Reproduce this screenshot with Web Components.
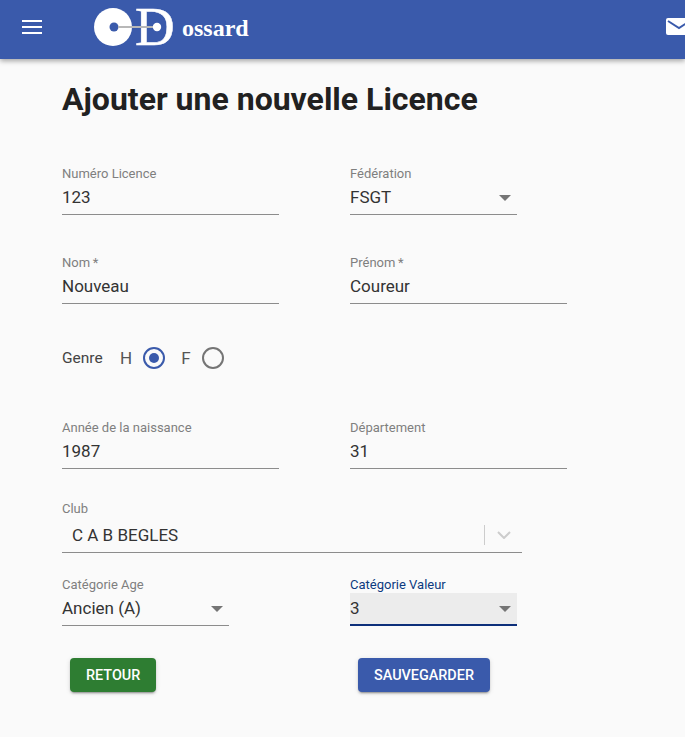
<!DOCTYPE html>
<html>
<head>
<meta charset="utf-8">
<style>
  html, body { margin: 0; padding: 0; background: #fafafa; height: 100%; overflow: hidden; }
  body { font-family: Roboto, "Liberation Sans", sans-serif; }
</style>
</head>
<body>
<app-bar></app-bar>
<licence-page>
  <form-row top="49">
    <text-field label="Numéro Licence" value="123" width="217"></text-field>
    <text-field label="Fédération" value="FSGT" width="167" select></text-field>
  </form-row>
  <form-row top="40">
    <text-field label="Nom&thinsp;*" value="Nouveau" width="217"></text-field>
    <text-field label="Prénom&thinsp;*" value="Coureur" width="217"></text-field>
  </form-row>
  <genre-field></genre-field>
  <form-row top="50">
    <text-field label="Année de la naissance" value="1987" width="217"></text-field>
    <text-field label="Département" value="31" width="217"></text-field>
  </form-row>
  <club-field></club-field>
  <form-row top="24">
    <text-field label="Catégorie Age" value="Ancien (A)" width="167" select></text-field>
    <text-field label="Catégorie Valeur" value="3" width="167" select focused></text-field>
  </form-row>
  <form-actions></form-actions>
</licence-page>

<script>
class AppBar extends HTMLElement {
  constructor() {
    super()
    this.attachShadow({ mode: 'open' }).innerHTML = `
      <style>
        :host { display: flex; align-items: center; height: 59px; background: #3a5aab; box-shadow: 0 2px 5px rgba(0,0,0,.35); overflow: hidden; position: relative; }
        .menu { margin-left: 22px; width: 20px; height: 14px; flex: none; margin-top: -5px; }
        .logo { margin-left: 52px; flex: none; width: 84px; height: 40px; margin-top: -3px; overflow: visible; }
        .name { font: bold 24px/28px "Liberation Serif", serif; color: #fff; margin-left: 4px; margin-top: -4px; }
        .mail { position: absolute; left: 666px; top: 18px; width: 26px; height: 17px; }
      </style>
      <svg class="menu" viewBox="0 0 20 14"><path d="M0 1h20M0 7h20M0 13h20" stroke="#fff" stroke-width="2"/></svg>
      <svg class="logo" viewBox="0 0 84 40">
        <circle cx="19" cy="19" r="19" fill="#fff"/>
        <circle cx="20" cy="19" r="4.5" fill="#3a5aab"/>
        <text x="41" y="37" font-family="Liberation Serif" font-size="55" fill="#fff" stroke="#fff" stroke-width=".5">D</text>
        <line x1="24" y1="19" x2="60" y2="19" stroke="#b8b8b8" stroke-width="2"/>
        <circle cx="63" cy="19" r="4.2" fill="#fff"/>
      </svg>
      <span class="name">ossard</span>
      <svg class="mail" viewBox="0 0 26 17">
        <rect width="26" height="17" rx="2" fill="#fff"/>
        <path d="M2 3l11 7 11-7" fill="none" stroke="#3a5aab" stroke-width="2"/>
      </svg>`
  }
}

class LicencePage extends HTMLElement {
  constructor() {
    super()
    this.attachShadow({ mode: 'open' }).innerHTML = `
      <style>
        :host { display: block; padding: 0 0 0 62px; }
        h1 { margin: 0; padding-top: 22px; font: 700 32px/36px Roboto, sans-serif; color: #212121; }
      </style>
      <h1>Ajouter une nouvelle Licence</h1>
      <slot></slot>`
  }
}

class FormRow extends HTMLElement {
  constructor() {
    super()
    this.attachShadow({ mode: 'open' }).innerHTML = `
      <style>
        :host { display: grid; grid-template-columns: 288px auto; justify-content: start; }
      </style>
      <slot></slot>`
  }
  connectedCallback() {
    this.style.marginTop = (this.getAttribute('top') || 0) + 'px'
  }
}

class TextField extends HTMLElement {
  constructor() {
    super()
    this.attachShadow({ mode: 'open' })
  }
  connectedCallback() {
    const select = this.hasAttribute('select')
    const focused = this.hasAttribute('focused')
    this.shadowRoot.innerHTML = `
      <style>
        :host { display: block; width: ${this.getAttribute('width')}px; }
        label { display: block; font-size: 13px; line-height: 16px; height: 16px; color: ${focused ? '#0d3a80' : '#7f7f7f'}; }
        .box { position: relative; height: 33px; box-sizing: border-box; padding-top: 3px; font-size: 17px; line-height: 24px; color: #333;
               border-bottom: ${focused ? '2px solid #0d2f7a' : '1px solid #8c8c8c'}; background: ${focused ? '#ececec' : 'transparent'}; }
        .arrow { position: absolute; right: 6px; top: 13px; width: 0; height: 0; border: 6.5px solid transparent; border-bottom: 0; border-top: 6px solid #757575; }
      </style>
      <label>${this.getAttribute('label')}</label>
      <div class="box">${this.getAttribute('value')}${select ? '<span class="arrow"></span>' : ''}</div>`
  }
}

class GenreField extends HTMLElement {
  constructor() {
    super()
    this.attachShadow({ mode: 'open' }).innerHTML = `
      <style>
        :host { display: flex; align-items: center; height: 24px; margin-top: 42px; color: #444; }
        .label { font-size: 15.5px; width: 58px; }
        .opt { font-size: 17px; color: #555; }
        .radio { box-sizing: border-box; width: 22px; height: 22px; border-radius: 50%; border: 2px solid #757575; margin-left: 11px; position: relative; }
        .radio.on { border-color: #3a5aab; margin-right: 16px; }
        .radio.on::after { content: ""; position: absolute; left: 4px; top: 4px; width: 10px; height: 10px; border-radius: 50%; background: #3a5aab; }
      </style>
      <span class="label">Genre</span>
      <span class="opt">H</span><span class="radio on"></span>
      <span class="opt">F</span><span class="radio"></span>`
  }
}

class ClubField extends HTMLElement {
  constructor() {
    super()
    this.attachShadow({ mode: 'open' }).innerHTML = `
      <style>
        :host { display: block; width: 460px; margin-top: 32px; }
        label { display: block; font-size: 13px; line-height: 16px; color: #7f7f7f; }
        .box { display: flex; align-items: center; height: 36px; box-sizing: border-box; border-bottom: 1px solid #8c8c8c; padding-left: 10px; font-size: 17px; color: #333; }
        .value { flex: 1; }
        .sep { width: 1px; height: 20px; background: #ccc; }
        svg { width: 14px; height: 8px; margin: 0 11px 0 12px; }
      </style>
      <label>Club</label>
      <div class="box">
        <span class="value">C A B BEGLES</span>
        <span class="sep"></span>
        <svg viewBox="0 0 14 8"><path d="M1 1l6 6 6-6" fill="none" stroke="#ccc" stroke-width="2"/></svg>
      </div>`
  }
}

class FormActions extends HTMLElement {
  constructor() {
    super()
    this.attachShadow({ mode: 'open' }).innerHTML = `
      <style>
        :host { display: grid; grid-template-columns: 288px auto; justify-content: start; margin-top: 32px; padding-left: 8px; }
        button { border: 0; height: 34px; border-radius: 4px; color: #fff; font: 500 14.4px Roboto, sans-serif; padding: 0 16px; justify-self: start;
                 box-shadow: 0 3px 1px -2px rgba(0,0,0,.2), 0 2px 2px 0 rgba(0,0,0,.14), 0 1px 5px 0 rgba(0,0,0,.12); }
        .back { background: #2e7d32; }
        .save { background: #3a5aab; }
      </style>
      <button class="back">RETOUR</button>
      <button class="save">SAUVEGARDER</button>`
  }
}

customElements.define('app-bar', AppBar)
customElements.define('licence-page', LicencePage)
customElements.define('form-row', FormRow)
customElements.define('text-field', TextField)
customElements.define('genre-field', GenreField)
customElements.define('club-field', ClubField)
customElements.define('form-actions', FormActions)
</script>
</body>
</html>
